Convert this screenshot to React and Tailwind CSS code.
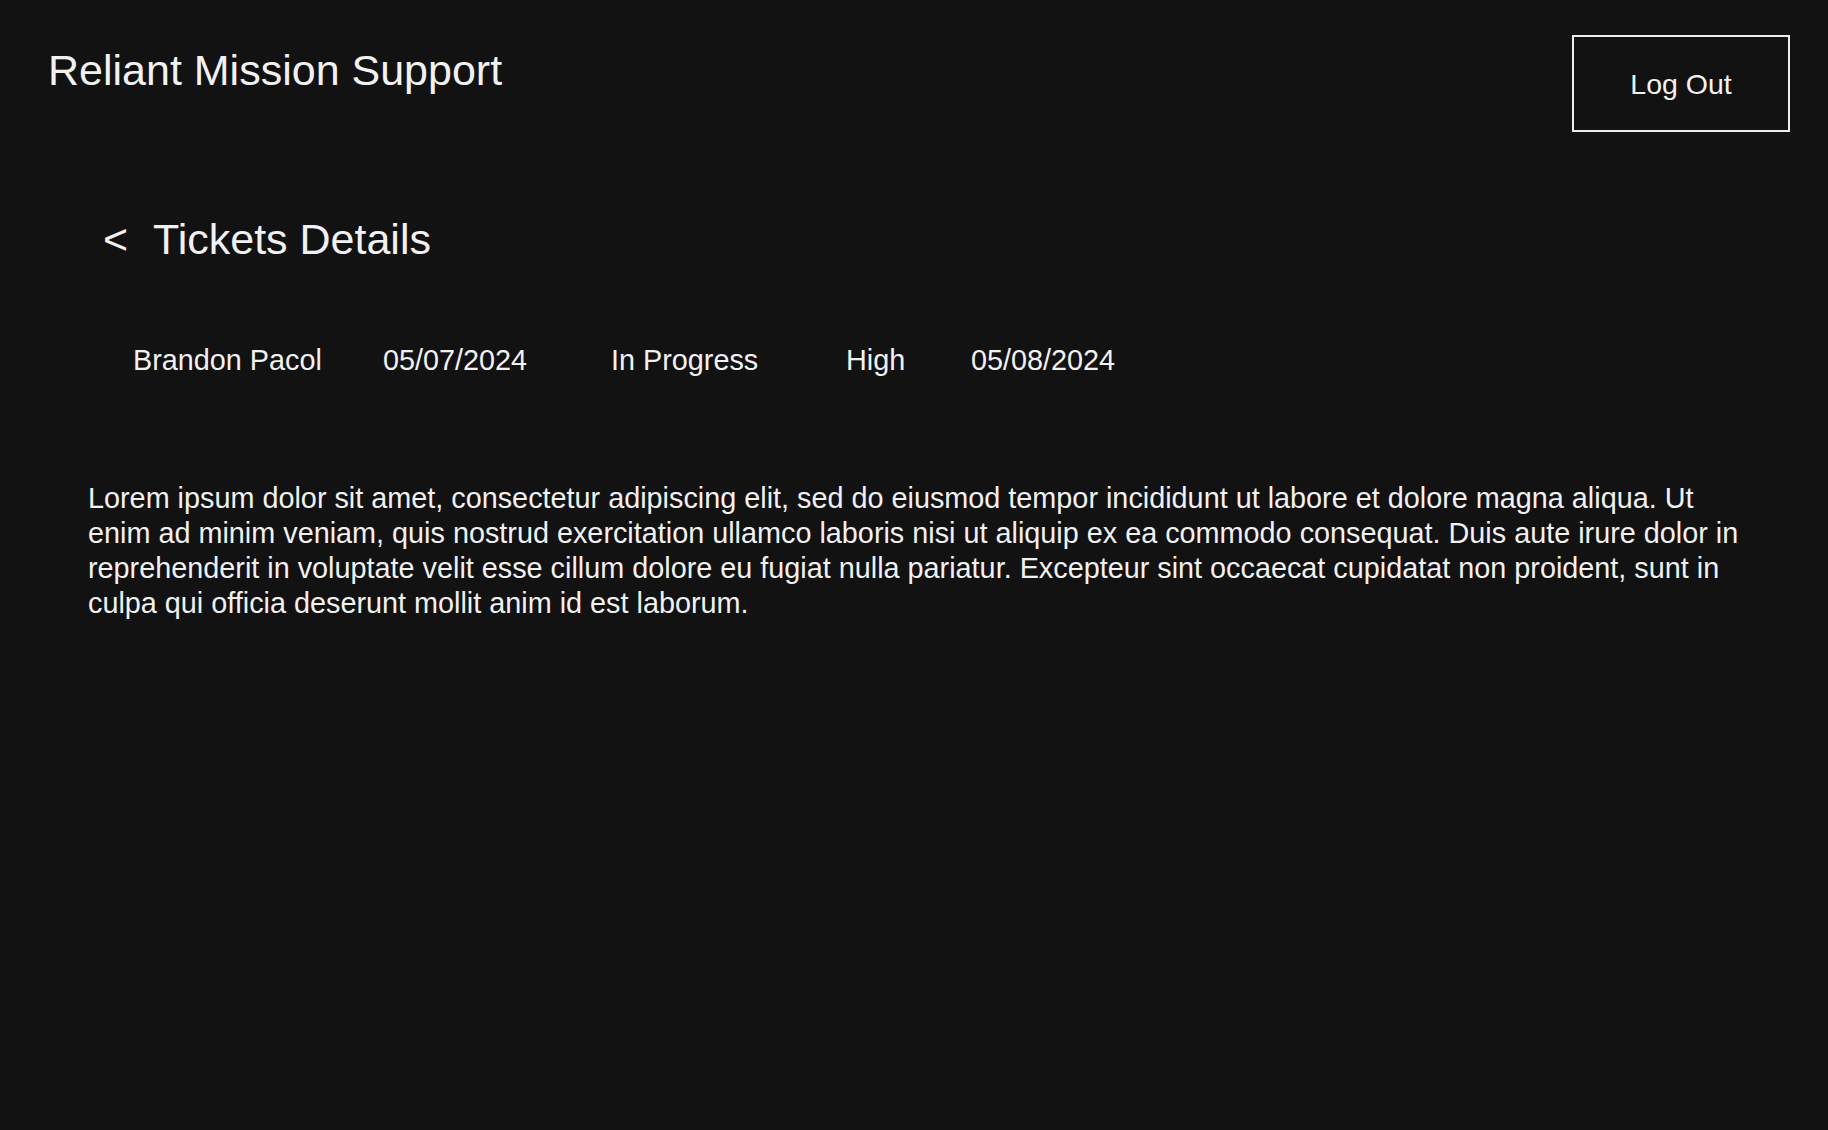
export default function App() {
  const cols = [
    { w: "w-[250px]", t: "Brandon Pacol" },
    { w: "w-[228px]", t: "05/07/2024" },
    { w: "w-[235px]", t: "In Progress" },
    { w: "w-[125px]", t: "High" },
    { w: "", t: "05/08/2024" },
  ];
  return (
    <div className="min-h-screen bg-[#121212] text-[#f1f1f1] font-['Liberation_Sans',Arial,sans-serif]">
      <header className="flex justify-between items-start pl-[48px] pr-[38px] pt-[35px]">
        <h1 className="text-[43px] leading-none mt-[14px] font-normal">Reliant Mission Support</h1>
        <button className="w-[218px] h-[97px] border-2 border-[#ececec] text-[28.5px] leading-none flex items-center justify-center pt-[1px]">
          Log Out
        </button>
      </header>
      <main className="pl-[88px]">
        <div className="flex items-center pl-[16px] mt-[86px] text-[43px] leading-none">
          <span className="w-[50px] -ml-[1px]">&lt;</span>
          <h2 className="font-normal">Tickets Details</h2>
        </div>
        <div className="flex pl-[45px] mt-[85px] text-[28.8px] leading-none">
          {cols.map((c, i) => (
            <div key={i} className={c.w}>
              {c.t}
            </div>
          ))}
        </div>
        <p className="mt-[106px] max-w-[1662px] text-[28.8px] leading-[35px]">
          Lorem ipsum dolor sit amet, consectetur adipiscing elit, sed do eiusmod tempor incididunt ut labore et dolore magna aliqua. Ut enim ad minim veniam, quis nostrud exercitation ullamco laboris nisi ut aliquip ex ea commodo consequat. Duis aute irure dolor in reprehenderit in voluptate velit esse cillum dolore eu fugiat nulla pariatur. Excepteur sint occaecat cupidatat non proident, sunt in culpa qui officia deserunt mollit anim id est laborum.
        </p>
      </main>
    </div>
  );
}
